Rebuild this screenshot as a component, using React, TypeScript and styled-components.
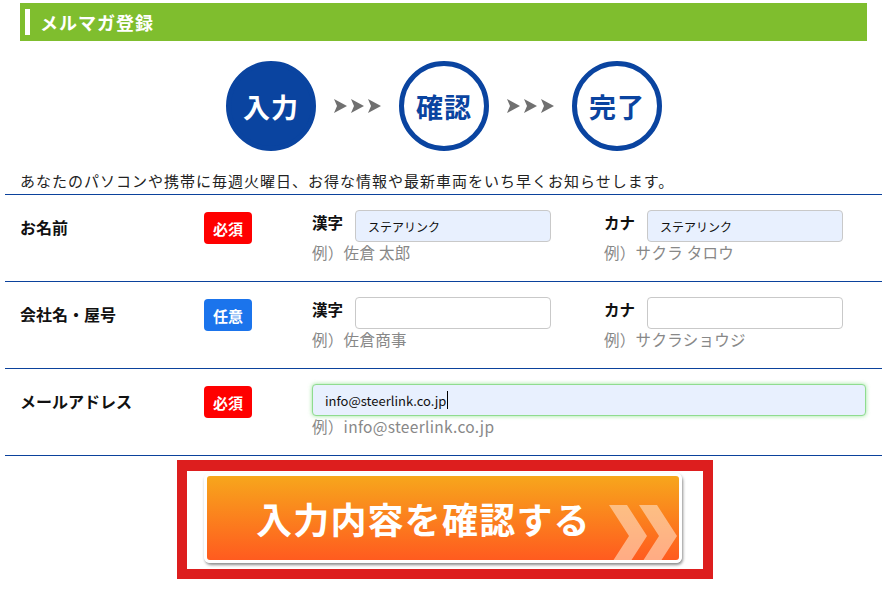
import React from 'react';
import styled, {createGlobalStyle} from 'styled-components';

const GlobalStyle = createGlobalStyle`
    body {
        margin: 0;
        background: #fff;
        font-family: "Noto Sans CJK JP", "Noto Sans", sans-serif;
        color: #222;
    }
`;

const Page = styled.div`
    width: 892px;
    padding-top: 3px;
`;

const Header = styled.div`
    margin: 0 25px 0 20px;
    height: 38px;
    background: #7fbe2e;
    display: flex;
    align-items: center;
    padding-left: 5px;
`;

const HeaderBar = styled.span`
    width: 5px;
    height: 26px;
    background: #fff;
    margin-right: 10px;
`;

const HeaderTitle = styled.h2`
    margin: 0;
    color: #fff;
    font-size: 18px;
    font-weight: bold;
    letter-spacing: 1px;
`;

const Steps = styled.div`
    display: flex;
    align-items: center;
    justify-content: center;
    gap: 18px;
    margin-top: 20px;
    padding-right: 4px;
`;

const Step = styled.div<{ $active?: boolean }>`
    box-sizing: border-box;
    width: 90px;
    height: 90px;
    border-radius: 50%;
    border: 5px solid #0a44a0;
    background: ${p => (p.$active ? '#0a44a0' : '#fff')};
    color: ${p => (p.$active ? '#fff' : '#0a44a0')};
    display: flex;
    align-items: center;
    justify-content: center;
    font-size: 27px;
    font-weight: bold;
    letter-spacing: 1px;
`;

const Intro = styled.p`
    margin: 20px 0 0 20px;
    font-size: 15px;
    letter-spacing: 1px;
    line-height: 20px;
    color: #222;
    padding-bottom: 3px;
`;

const Form = styled.div`
    margin: 0 10px 0 5px;
    border-top: 1px solid #0b429c;
`;

const Row = styled.div`
    box-sizing: border-box;
    height: 87px;
    padding: 15px 0 0 15px;
    border-bottom: 1px solid #0b429c;
    display: grid;
    grid-template-columns: 184px 108px 1fr;
    align-items: start;
`;

const RowLabel = styled.div`
    font-size: 16px;
    font-weight: bold;
    line-height: 32px;
    margin-top: 1px;
    color: #111;
`;

const Badge = styled.span<{ $optional?: boolean }>`
    width: 48px;
    height: 32px;
    margin-top: 2px;
    border-radius: 4px;
    background: ${p => (p.$optional ? '#1b74ec' : '#ff0000')};
    color: #fff;
    font-size: 15px;
    font-weight: bold;
    display: flex;
    align-items: center;
    justify-content: center;
`;

const Fields = styled.div`
    display: flex;
`;

const Group = styled.div`
    width: 292px;
    display: grid;
    grid-template-columns: 43px 196px;
`;

const FieldLabel = styled.span`
    font-size: 15.5px;
    font-weight: bold;
    line-height: 24px;
    color: #111;
`;

const Input = styled.div<{ $filled?: boolean; $focused?: boolean; $wide?: boolean }>`
    box-sizing: border-box;
    height: 32px;
    width: ${p => (p.$wide ? '554px' : '196px')};
    border: 1px solid ${p => (p.$focused ? '#8fdc8f' : '#c9c9c9')};
    box-shadow: ${p => (p.$focused ? '0 0 4px rgba(110, 220, 110, 0.7)' : 'none')};
    border-radius: 4px;
    background: ${p => (p.$filled ? '#e8f0fe' : '#fff')};
    padding-left: 12px;
    display: flex;
    align-items: center;
    font-size: ${p => (p.$wide ? '13px' : '12px')};
    color: #111;
`;

const Caret = styled.span`
    width: 1px;
    height: 18px;
    background: #000;
    margin-left: 1px;
`;

const Example = styled.div`
    grid-column: 1 / -1;
    font-size: 15.5px;
    letter-spacing: 0.3px;
    line-height: 20px;
    color: #888;
`;

const ButtonArea = styled.div`
    display: flex;
    justify-content: center;
    margin-top: 4px;
    padding-right: 2px;
`;

const ButtonFrame = styled.div`
    width: 536px;
    box-sizing: border-box;
    border: 10px solid #dd1e1e;
    border-top-width: 11px;
    background: #fff;
    padding: 2px 21px 6px 17px;
`;

const SubmitButton = styled.button`
    position: relative;
    overflow: hidden;
    width: 478px;
    height: 90px;
    box-sizing: border-box;
    border: 3px solid #fff;
    border-radius: 6px;
    background: linear-gradient(to bottom, #f7a61c, #ff5b1f);
    box-shadow: 1px 2px 3px rgba(0, 0, 0, 0.45);
    display: flex;
    align-items: center;
    padding: 0 0 0 49px;
    color: #fff;
    font-family: "Noto Sans CJK JP", sans-serif;
    font-size: 36px;
    font-weight: bold;
    letter-spacing: 1.2px;
    cursor: pointer;
`;

const Chevrons = styled.svg`
    position: absolute;
    right: 0;
    top: 29px;
`;

const StepArrows = () => (
    <svg width="47" height="14" viewBox="0 0 47 14">
        {[0, 17, 34].map(x => (
            <polygon key={x} points={`${x},0 ${x + 13},7 ${x},14 ${x + 3},7`} fill="#707070"/>
        ))}
    </svg>
);

const App: React.FC = () => {
    return (
        <Page>
            <GlobalStyle/>
            <Header>
                <HeaderBar/>
                <HeaderTitle>メルマガ登録</HeaderTitle>
            </Header>

            <Steps>
                <Step $active>入力</Step>
                <StepArrows/>
                <Step>確認</Step>
                <StepArrows/>
                <Step>完了</Step>
            </Steps>

            <Intro>あなたのパソコンや携帯に毎週火曜日、お得な情報や最新車両をいち早くお知らせします。</Intro>

            <Form>
                <Row>
                    <RowLabel>お名前</RowLabel>
                    <Badge>必須</Badge>
                    <Fields>
                        <Group>
                            <FieldLabel>漢字</FieldLabel>
                            <Input $filled>ステアリンク</Input>
                            <Example>例）佐倉 太郎</Example>
                        </Group>
                        <Group>
                            <FieldLabel>カナ</FieldLabel>
                            <Input $filled>ステアリンク</Input>
                            <Example>例）サクラ タロウ</Example>
                        </Group>
                    </Fields>
                </Row>
                <Row>
                    <RowLabel>会社名・屋号</RowLabel>
                    <Badge $optional>任意</Badge>
                    <Fields>
                        <Group>
                            <FieldLabel>漢字</FieldLabel>
                            <Input/>
                            <Example>例）佐倉商事</Example>
                        </Group>
                        <Group>
                            <FieldLabel>カナ</FieldLabel>
                            <Input/>
                            <Example>例）サクラショウジ</Example>
                        </Group>
                    </Fields>
                </Row>
                <Row>
                    <RowLabel>メールアドレス</RowLabel>
                    <Badge>必須</Badge>
                    <div>
                        <Input $filled $focused $wide>info@steerlink.co.jp<Caret/></Input>
                        <Example>例）info@steerlink.co.jp</Example>
                    </div>
                </Row>
            </Form>

            <ButtonArea>
                <ButtonFrame>
                    <SubmitButton type="button">
                        入力内容を確認する
                        <Chevrons width="70" height="62" viewBox="0 0 70 62">
                            <polygon points="0,0 18,0 38,31 18,62 0,62 20,31" fill="rgba(255,225,200,0.6)"/>
                            <polygon points="30,0 48,0 68,31 48,62 30,62 50,31" fill="rgba(255,225,200,0.6)"/>
                        </Chevrons>
                    </SubmitButton>
                </ButtonFrame>
            </ButtonArea>
        </Page>
    );
};

export default App;
